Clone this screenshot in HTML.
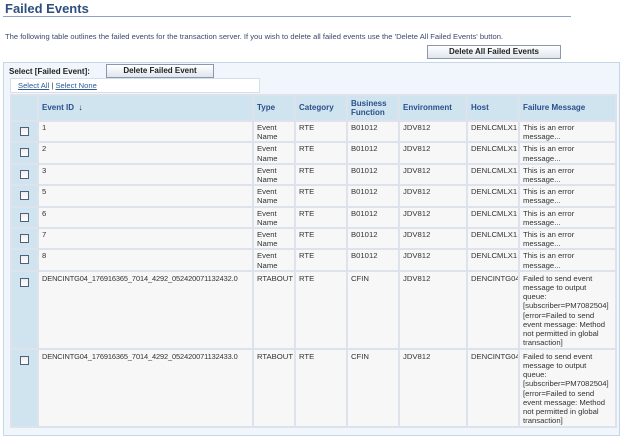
<!DOCTYPE html>
<html><head><style>
*{margin:0;padding:0;box-sizing:border-box}
body{width:624px;height:436px;overflow:hidden;background:#fff;font-family:"Liberation Sans",Tahoma,sans-serif;font-size:8px;color:#333;position:relative}
.a{position:absolute}
h1{position:absolute;left:5px;top:1px;font-size:13px;color:#2f4f7f;font-weight:bold}
.rule{left:3px;top:16px;width:568px;height:1px;background:#8ea3c4}
.desc{left:5px;top:32px;font-size:7.6px;color:#3a4a6a;white-space:nowrap}
.btn{border:1px solid #8a98aa;background:linear-gradient(#ffffff,#dfe6ee);font-weight:bold;font-size:8px;text-align:center;color:#222;line-height:12px}
.panel{left:3px;top:62px;width:617px;height:374px;background:#f0f6fb;border:1px solid #c5d6e6}
.lbl{left:9px;top:67px;font-weight:bold;font-size:8px;color:#222}
.sel{left:10px;top:78px;width:250px;height:15px;background:#fff;border:1px solid #d5dfe9}
.sel a{color:#2a5a9a;text-decoration:underline}
table{position:absolute;left:10px;top:94px;width:605px;border-collapse:collapse;table-layout:fixed}
td,th{border:2px solid #dde2ec;vertical-align:top;text-align:left;padding:2px 3px;line-height:9.2px;font-size:7.7px;background:#f7f7f7;overflow:hidden}
th{background:#cfe4ee;color:#2a4f8c;font-weight:bold;font-size:8px;vertical-align:middle;height:26px}
td.c{background:#cfe4ee;text-align:center;padding-top:6px}
th.c{background:#cfe4ee}
.cb{display:inline-block;width:9px;height:9px;border:1px solid #50607a;background:linear-gradient(#eee,#fff)}
tr.r td{height:19px;padding-top:1px;padding-bottom:0}
tr.r td.c{padding-top:5px}
tr.b td{height:78px;padding-bottom:0}
td.f{padding-right:6px}
td.id{font-size:7.4px;letter-spacing:-0.1px}
</style></head><body>
<h1>Failed Events</h1>
<div class="a rule"></div>
<div class="a desc">The following table outlines the failed events for the transaction server. If you wish to delete all failed events use the 'Delete All Failed Events' button.</div>
<div class="a btn" style="left:427px;top:45px;width:134px;height:14px">Delete All Failed Events</div>
<div class="a panel"></div>
<div class="a lbl">Select [Failed Event]:</div>
<div class="a btn" style="left:106px;top:64px;width:108px;height:14px">Delete Failed Event</div>
<div class="a sel"><div style="padding:2px 7px;font-size:7.6px"><a>Select All</a> | <a>Select None</a></div></div>
<table>
<colgroup><col style="width:27px"><col style="width:215px"><col style="width:42px"><col style="width:52px"><col style="width:52px"><col style="width:68px"><col style="width:52px"><col style="width:97px"></colgroup>
<tr><th class="c"></th><th>Event ID &nbsp;<span style="color:#222">&#8595;</span></th><th>Type</th><th>Category</th><th>Business Function</th><th>Environment</th><th>Host</th><th>Failure Message</th></tr>
<tr class="r"><td class="c"><span class="cb"></span></td><td>1</td><td>Event Name</td><td>RTE</td><td>B01012</td><td>JDV812</td><td>DENLCMLX1</td><td class="f">This is an error message...</td></tr>
<tr class="r"><td class="c"><span class="cb"></span></td><td>2</td><td>Event Name</td><td>RTE</td><td>B01012</td><td>JDV812</td><td>DENLCMLX1</td><td class="f">This is an error message...</td></tr>
<tr class="r"><td class="c"><span class="cb"></span></td><td>3</td><td>Event Name</td><td>RTE</td><td>B01012</td><td>JDV812</td><td>DENLCMLX1</td><td class="f">This is an error message...</td></tr>
<tr class="r"><td class="c"><span class="cb"></span></td><td>5</td><td>Event Name</td><td>RTE</td><td>B01012</td><td>JDV812</td><td>DENLCMLX1</td><td class="f">This is an error message...</td></tr>
<tr class="r"><td class="c"><span class="cb"></span></td><td>6</td><td>Event Name</td><td>RTE</td><td>B01012</td><td>JDV812</td><td>DENLCMLX1</td><td class="f">This is an error message...</td></tr>
<tr class="r"><td class="c"><span class="cb"></span></td><td>7</td><td>Event Name</td><td>RTE</td><td>B01012</td><td>JDV812</td><td>DENLCMLX1</td><td class="f">This is an error message...</td></tr>
<tr class="r"><td class="c"><span class="cb"></span></td><td>8</td><td>Event Name</td><td>RTE</td><td>B01012</td><td>JDV812</td><td>DENLCMLX1</td><td class="f">This is an error message...</td></tr>
<tr class="b"><td class="c"><span class="cb"></span></td><td class="id">DENCINTG04_176916365_7014_4292_052420071132432.0</td><td>RTABOUT</td><td>RTE</td><td>CFIN</td><td>JDV812</td><td>DENCINTG04</td><td class="f">Failed to send event message to output<br>queue: [subscriber=PM7082504] [error=Failed to send event message: Method not permitted in global transaction]</td></tr>
<tr class="b"><td class="c"><span class="cb"></span></td><td class="id">DENCINTG04_176916365_7014_4292_052420071132433.0</td><td>RTABOUT</td><td>RTE</td><td>CFIN</td><td>JDV812</td><td>DENCINTG04</td><td class="f">Failed to send event message to output<br>queue: [subscriber=PM7082504] [error=Failed to send event message: Method not permitted in global transaction]</td></tr>
</table>
</body></html>
